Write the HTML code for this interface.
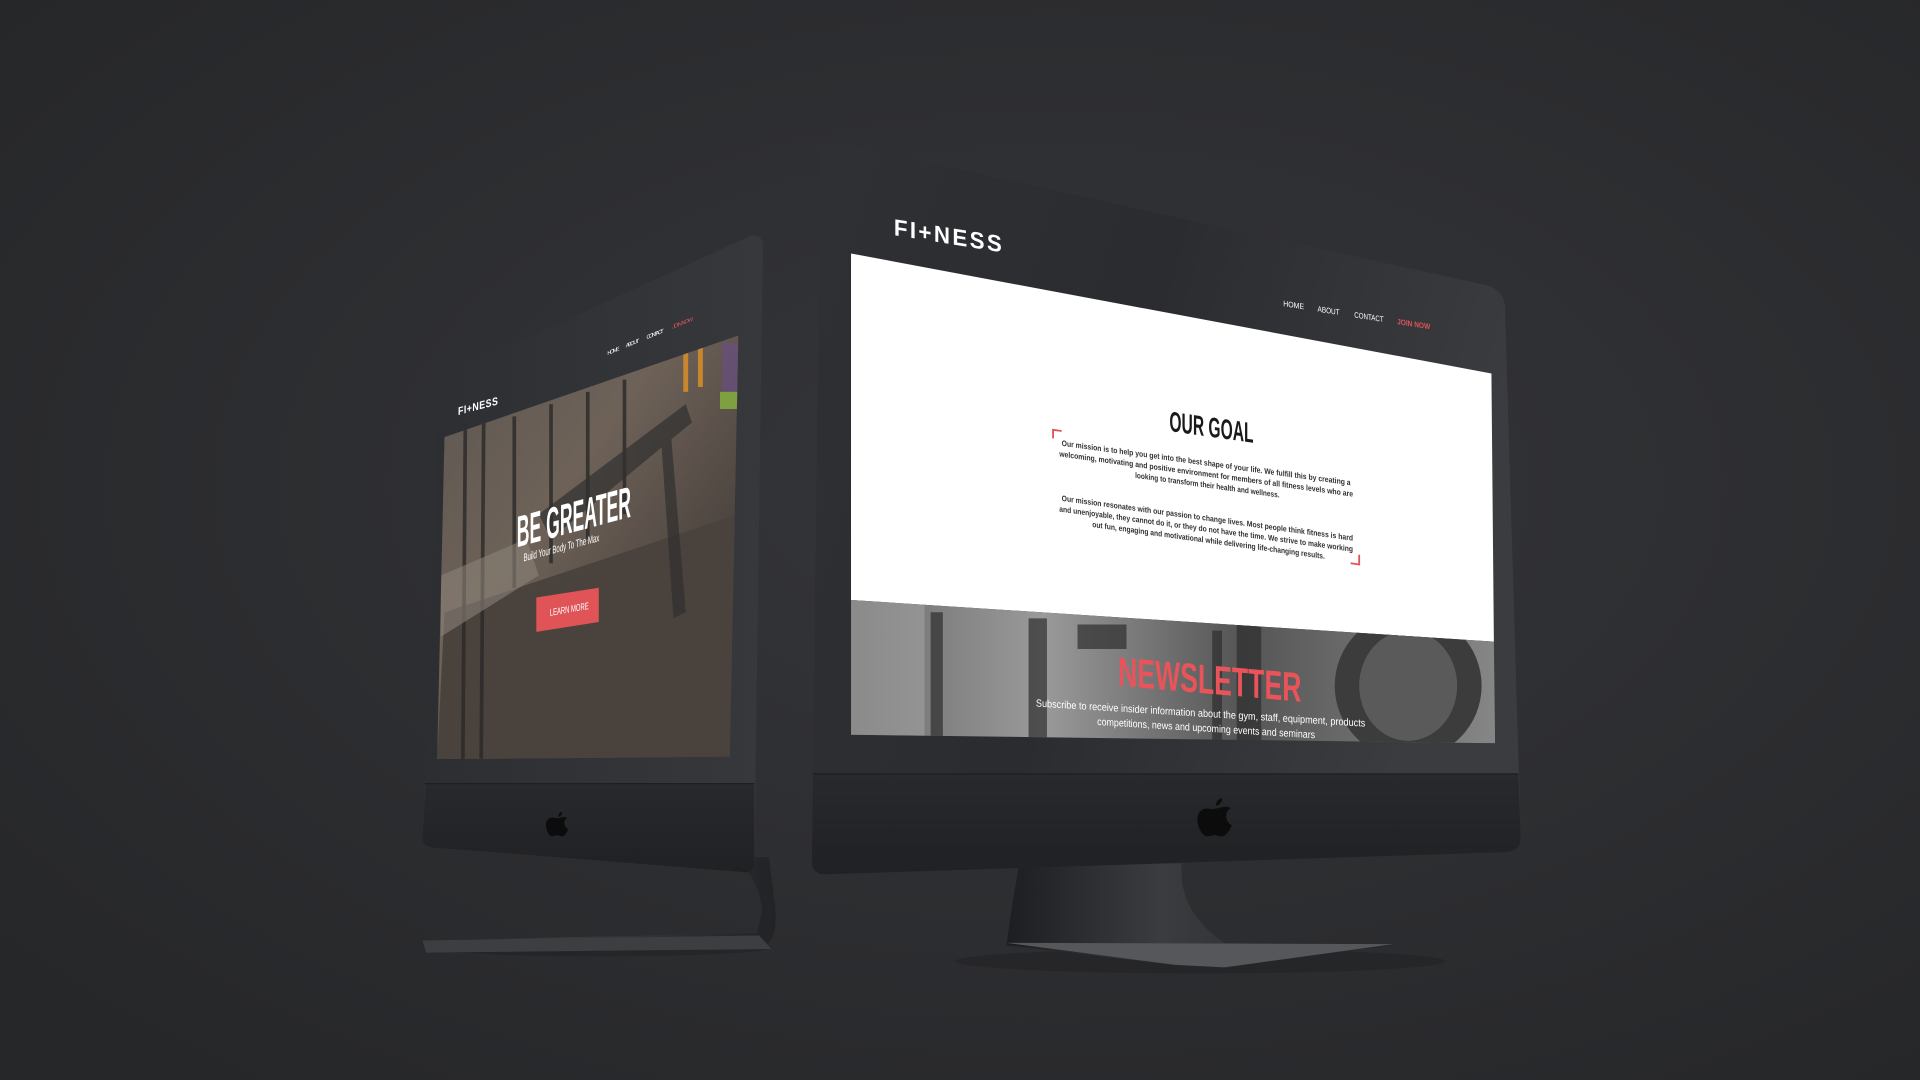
<!DOCTYPE html>
<html><head><meta charset="utf-8"><style>
html,body{margin:0;padding:0;width:1920px;height:1080px;overflow:hidden;background:#2b2c2f}
svg{display:block}
text{font-family:"Liberation Sans",sans-serif}
</style></head><body>
<svg width="1920" height="1080" viewBox="0 0 1568 882" xmlns="http://www.w3.org/2000/svg">
<defs>
<radialGradient id="bg" cx="0.55" cy="0.45" r="0.7">
<stop offset="0" stop-color="#35363a"/><stop offset="1" stop-color="#262729"/></radialGradient>
<linearGradient id="bodyR" x1="0" y1="0" x2="1" y2="0.3">
<stop offset="0" stop-color="#2e3034"/><stop offset="0.5" stop-color="#2a2c30"/><stop offset="1" stop-color="#3a3c40"/></linearGradient>
<linearGradient id="bodyL" x1="0" y1="0" x2="1" y2="0">
<stop offset="0" stop-color="#2c2e32"/><stop offset="1" stop-color="#36383c"/></linearGradient>
<linearGradient id="chin" x1="0" y1="0" x2="0" y2="1">
<stop offset="0" stop-color="#27292c"/><stop offset="1" stop-color="#202124"/></linearGradient>
<linearGradient id="stand" x1="0" y1="0" x2="1" y2="0">
<stop offset="0" stop-color="#1d1e21"/><stop offset="0.4" stop-color="#3a3c40"/><stop offset="1" stop-color="#222326"/></linearGradient>
<linearGradient id="gym" x1="0" y1="0" x2="1" y2="1">
<stop offset="0" stop-color="#5a5550"/><stop offset="0.4" stop-color="#6e6258"/><stop offset="0.7" stop-color="#4d4540"/><stop offset="1" stop-color="#3a3532"/></linearGradient>
<linearGradient id="news" x1="0" y1="0" x2="1" y2="0">
<stop offset="0" stop-color="#6a6a6a"/><stop offset="0.3" stop-color="#9a9a9a"/><stop offset="0.6" stop-color="#555"/><stop offset="1" stop-color="#888"/></linearGradient>
<clipPath id="gc"><polygon points="363,357 603,274 596,618 357,620"/></clipPath>
<clipPath id="nc"><polygon points="695,490 1220,524 1221,607 695,600"/></clipPath>
</defs>
<rect width="1568" height="882" fill="url(#bg)"/>
<ellipse cx="980" cy="785" rx="200" ry="10" fill="#1f2022" opacity="0.5"/>
<ellipse cx="490" cy="774" rx="140" ry="7" fill="#1f2022" opacity="0.5"/>

<!-- LEFT MONITOR stand -->
<path d="M600,700 Q622,720 622,745 L618,762 L345,768 L348,774 L620,776 Q636,770 633,740 L628,700 Z" fill="url(#stand)"/>
<polygon points="345,768 620,764 630,775 348,778" fill="#3c3e42"/>
<path d="M359,318 Q360,308 372,303 L612,193 Q622,190 623,200 L616,706 Q615,714 605,712 L352,692 Q345,691 345,684 Z" fill="url(#bodyL)"/>
<path d="M348,640 L616,640 L616,706 Q615,714 605,712 L352,692 Q345,691 345,684 Z" fill="url(#chin)"/>
<line x1="347" y1="640" x2="616" y2="640" stroke="#1e1f22" stroke-width="1"/>
<g clip-path="url(#gc)">
<rect x="350" y="260" width="260" height="370" fill="url(#gym)"/>
<polygon points="363,500 603,420 603,620 357,620" fill="#4a423c"/>
<g stroke="#2a2828" stroke-width="3" opacity="0.8">
<line x1="380" y1="350" x2="378" y2="620"/><line x1="395" y1="345" x2="393" y2="620"/>
<line x1="420" y1="340" x2="420" y2="480"/><line x1="450" y1="330" x2="450" y2="460"/>
<line x1="480" y1="320" x2="480" y2="440"/><line x1="510" y1="310" x2="510" y2="420"/>
</g>
<g fill="#303030" opacity="0.7">
<polygon points="440,420 560,330 565,345 450,440"/>
<polygon points="540,360 548,355 560,500 550,505"/>
</g>
<polygon points="360,470 430,440 440,470 360,520" fill="#8a8278" opacity="0.6"/>
<rect x="558" y="280" width="4" height="40" fill="#c8862e"/><rect x="570" y="276" width="4" height="40" fill="#c8862e"/>
<rect x="590" y="280" width="13" height="50" fill="#6a4c8a" opacity="0.6"/>
<rect x="588" y="320" width="15" height="14" fill="#7fa040"/>
</g>
<g transform="translate(422,447) skewY(-15)">
<text x="0" y="0" font-size="36" fill="#fff" font-weight="bold" transform="scale(0.4,1)">BE GREATER</text>
<text x="10" y="13" font-size="9" fill="#fff" transform="scale(0.55,1)">Build Your Body To The Max</text>
</g>
<polygon points="438,488 489,480 489,508 438,516" fill="#e05458"/>
<text transform="translate(449,503) skewY(-10) scale(0.6,1)" font-size="8" fill="#fff">LEARN MORE</text>
<text transform="translate(374,339) skewY(-15) scale(0.8,1)" font-size="9" fill="#fff" font-weight="bold" letter-spacing="0.5">FI+NESS</text>
<g transform="translate(496,290) skewY(-22)" font-size="4.5" fill="#fff">
<text x="0" y="0" textLength="10">HOME</text><text x="15" y="0" textLength="11">ABOUT</text><text x="32" y="0" textLength="14">CONTACT</text><text x="53" y="0" fill="#e05458" textLength="17">JOIN NOW</text>
</g>
<path d="M457,668 c4,-1 5,-1 6,0 c-3,2 -3,7 1,9 c-1,3 -3,6 -5,6 c-2,0 -2,-1 -4,-1 c-2,0 -3,1 -4,1 c-3,0 -6,-7 -5,-11 c1,-4 5,-5 7,-4 z M459,663 c0,2 -1,4 -3,4 c0,-2 1,-4 3,-4z" fill="#0c0c0d"/>

<!-- RIGHT MONITOR stand -->
<path d="M832,708 L965,705 Q962,745 1000,770 L1138,772 Q1000,790 960,788 L822,772 Q826,740 832,708 Z" fill="url(#stand)"/>
<polygon points="822,770 1138,771 1000,790 960,788" fill="#55575b"/>
<path d="M670,128 Q671,114 686,117 L1214,233 Q1228,237 1229,250 L1242,685 Q1242,695 1230,696 L674,714 Q663,714 663,703 Z" fill="url(#bodyR)"/>
<path d="M664,632 L1240,632 L1242,685 Q1242,695 1230,696 L674,714 Q663,714 663,703 Z" fill="url(#chin)"/>
<line x1="664" y1="632" x2="1240" y2="632" stroke="#1e1f22" stroke-width="1"/>
<polygon points="695,207 1218,305 1220,524 695,490" fill="#ffffff"/>
<g clip-path="url(#nc)">
<rect x="690" y="485" width="540" height="130" fill="url(#news)"/>
<g fill="#2e2e2e" opacity="0.7">
<rect x="760" y="500" width="10" height="110"/><rect x="840" y="505" width="15" height="110"/>
<rect x="880" y="510" width="40" height="20"/><rect x="990" y="515" width="8" height="100"/>
<rect x="1010" y="510" width="20" height="100"/>
</g>
<ellipse cx="1150" cy="560" rx="60" ry="60" fill="#3c3c3c"/>
<ellipse cx="1150" cy="560" rx="40" ry="45" fill="#5a5a5a"/>
<rect x="695" y="490" width="60" height="120" fill="#aaa" opacity="0.5"/>
</g>
<text transform="translate(913,560) skewY(5) scale(0.68,1.05)" font-size="32" fill="#e8545a" font-weight="bold">NEWSLETTER</text>
<g transform="translate(846,577) skewY(3.5)" font-size="8.5" fill="#fff">
<text x="0" y="0" textLength="269" lengthAdjust="spacingAndGlyphs">Subscribe to receive insider information about the gym, staff, equipment, products</text>
<text x="50" y="12" textLength="178" lengthAdjust="spacingAndGlyphs">competitions, news and upcoming events and seminars</text>
</g>
<text transform="translate(955,352) skewY(8) scale(0.58,1.05)" font-size="22" fill="#1a1a1a" font-weight="bold">OUR GOAL</text>
<g transform="translate(867,364) skewY(7.8)" font-size="6.5" fill="#333" font-weight="bold">
<text x="0" y="0" textLength="236" lengthAdjust="spacingAndGlyphs">Our mission is to help you get into the best shape of your life. We fulfill this by creating a</text>
<text x="-2" y="9" textLength="240" lengthAdjust="spacingAndGlyphs">welcoming, motivating and positive environment for members of all fitness levels who are</text>
<text x="60" y="18" textLength="118" lengthAdjust="spacingAndGlyphs">looking to transform their health and wellness.</text>
<text x="0" y="45" textLength="238" lengthAdjust="spacingAndGlyphs">Our mission resonates with our passion to change lives. Most people think fitness is hard</text>
<text x="-2" y="54" textLength="240" lengthAdjust="spacingAndGlyphs">and unenjoyable, they cannot do it, or they do not have the time. We strive to make working</text>
<text x="25" y="63" textLength="190" lengthAdjust="spacingAndGlyphs">out fun, engaging and motivational while delivering life-changing results.</text>
</g>
<path d="M860,358 L860,351 L867,352" stroke="#e05458" stroke-width="1.5" fill="none"/>
<path d="M1110,453 L1110,461 L1103,460" stroke="#e05458" stroke-width="1.5" fill="none"/>
<text transform="translate(730,192) skewY(9)" font-size="19" fill="#fff" font-weight="bold" letter-spacing="2" textLength="90" lengthAdjust="spacingAndGlyphs">FI+NESS</text>
<g transform="translate(1048,250) skewY(9)" font-size="6.5" fill="#fff">
<text x="0" y="0" textLength="17" lengthAdjust="spacingAndGlyphs">HOME</text><text x="28" y="0" textLength="18" lengthAdjust="spacingAndGlyphs">ABOUT</text><text x="58" y="0" textLength="24" lengthAdjust="spacingAndGlyphs">CONTACT</text><text x="93" y="0" fill="#e05458" font-weight="bold" textLength="27" lengthAdjust="spacingAndGlyphs">JOIN NOW</text>
</g>
<path d="M995,660 c6,-2 8,-1 10,0 c-5,3 -5,11 1,14 c-2,5 -5,9 -8,9 c-3,0 -3,-1 -6,-1 c-3,0 -4,1 -6,1 c-5,0 -9,-10 -8,-16 c1,-6 7,-8 11,-6 z M998,652 c0,3 -2,6 -5,6 c0,-3 2,-6 5,-6z" fill="#0c0c0d"/>
</svg>
</body></html>
